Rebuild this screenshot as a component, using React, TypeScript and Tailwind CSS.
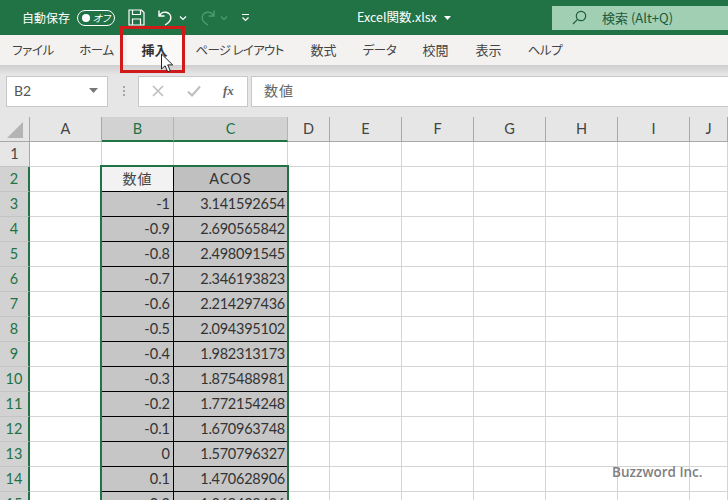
import React from "react";

const tabs: [string, number, boolean][] = [
  ["ファイル", 66, false],
  ["ホーム", 61, false],
  ["挿入", 55, true],
  ["ページ レイアウト", 115, false],
  ["数式", 53, true],
  ["データ", 59, false],
  ["校閲", 53, true],
  ["表示", 53, true],
  ["ヘルプ", 60, false],
];

const cols = ["A", "B", "C", "D", "E", "F", "G", "H", "I", "J"];
const data: [string, string][] = [
  ["-1", "3.141592654"],
  ["-0.9", "2.690565842"],
  ["-0.8", "2.498091545"],
  ["-0.7", "2.346193823"],
  ["-0.6", "2.214297436"],
  ["-0.5", "2.094395102"],
  ["-0.4", "1.982313173"],
  ["-0.3", "1.875488981"],
  ["-0.2", "1.772154248"],
  ["-0.1", "1.670963748"],
  ["0", "1.570796327"],
  ["0.1", "1.470628906"],
  ["0.2", "1.369438406"],
];

function Blank() {
  return <div className="border-r border-b border-[#d4d4d4] bg-white" />;
}

function Row({ n }: { n: number }) {
  const inTable = n >= 2;
  const rowHead = (
    <div
      className={
        inTable
          ? "flex items-center justify-center border-b border-[#c4c4c4] border-r-2 border-r-[#217346] bg-[#d2d2d2] pb-[1px] text-[#217346]"
          : "flex items-center justify-center border-b border-[#c4c4c4] border-r border-r-[#a8a8a8] bg-[#e6e6e6] pb-[1px] text-[#444444]"
      }
    >
      {n}
    </div>
  );
  let b: React.ReactNode = <Blank />;
  let c: React.ReactNode = <Blank />;
  if (n === 2) {
    b = (
      <div className="flex items-center justify-center border-r border-b border-black bg-[#f2f2f2] pb-[2px] font-['Noto_Sans_CJK_JP',sans-serif] text-[14px] text-[#444444] tracking-[1px]">
        数値
      </div>
    );
    c = (
      <div className="flex items-center justify-center border-r border-b border-black bg-[#c0c0c0] pb-[1px] text-[#333333] tracking-[1px]">
        ACOS
      </div>
    );
  } else if (n > 2) {
    const d = data[n - 3];
    b = (
      <div className="flex items-center justify-end border-r border-b border-black bg-[#c6c6c6] pr-[3px] pb-[1px] text-[#333333]">
        {d[0]}
      </div>
    );
    c = (
      <div className="flex items-center justify-end border-r border-b border-black bg-[#c6c6c6] pr-[2px] pb-[1px] tracking-[-0.25px] text-[#333333]">
        {d[1]}
      </div>
    );
  }
  return (
    <>
      {rowHead}
      <Blank />
      {b}
      {c}
      {Array.from({ length: 7 }).map((_, i) => (
        <Blank key={i} />
      ))}
    </>
  );
}

export default function App() {
  return (
    <div className="relative h-[500px] w-[728px] overflow-hidden bg-white font-['Lato',sans-serif] text-[14.5px]">
      {/* Title bar */}
      <div className="flex h-[35px] items-center bg-[#217346] font-['Noto_Sans_CJK_JP',sans-serif] text-[12px] text-white">
        <span className="ml-[22px] w-[48px] whitespace-nowrap">自動保存</span>
        <div className="ml-[7px] flex h-[16px] w-[38px] items-center justify-between rounded-full border border-white pl-[4px] pr-[4px]">
          <span className="h-[8px] w-[8px] rounded-full bg-white" />
          <span className="text-[10px] leading-none italic [font-feature-settings:'palt']">オフ</span>
        </div>
        <svg className="ml-[13px]" width="17" height="17" viewBox="0 0 17 17" fill="none" stroke="#ffffff" strokeWidth="1.2">
          <path d="M1 1h12.5L16 3.5V16H1z" />
          <path d="M4.5 1v4.5h8V1M4.5 16v-6h8v6" />
        </svg>
        <svg className="ml-[12px]" width="17" height="17" viewBox="0 0 17 17" fill="none" stroke="#ffffff" strokeWidth="1.4">
          <path d="M2 1.5V7h5.5M2.3 6.6C4 3.8 6.4 2.8 9 3.2c3.2.6 5.2 3.2 4.8 6.2-.4 2.6-2.2 4.6-5.8 6.6" />
        </svg>
        <svg className="ml-[5px]" width="8" height="6" viewBox="0 0 8 6" fill="none" stroke="#ffffff" strokeWidth="1.2">
          <path d="M1 1.5l3 3 3-3" />
        </svg>
        <svg className="ml-[12px]" width="17" height="17" viewBox="0 0 17 17" fill="none" stroke="#4f9a72" strokeWidth="1.4">
          <path d="M15 1.5V7H9.5M14.7 6.6C13 3.8 10.6 2.8 8 3.2c-3.2.6-5.2 3.2-4.8 6.2.4 2.6 2.2 4.6 5.8 6.6" />
        </svg>
        <svg className="ml-[4px]" width="8" height="6" viewBox="0 0 8 6" fill="none" stroke="#4f9a72" strokeWidth="1.2">
          <path d="M1 1.5l3 3 3-3" />
        </svg>
        <svg className="ml-[13px]" width="9" height="9" viewBox="0 0 9 9" fill="none" stroke="#ffffff" strokeWidth="1.2">
          <path d="M1 1.5h7M1.5 4.5L4.5 7.5l3-3" />
        </svg>
        <span className="ml-[107px] w-[82px] whitespace-nowrap text-[12.5px] [font-feature-settings:'palt']">
          Excel関数.xlsx
        </span>
        <svg className="ml-[5px]" width="7" height="4" viewBox="0 0 7 4" fill="#ffffff">
          <path d="M0 0h7L3.5 4z" />
        </svg>
        <div className="ml-[101px] flex h-[24px] flex-1 items-center bg-[#a0cfb4] text-[#1d5a38]">
          <svg className="ml-[20px]" width="15" height="15" viewBox="0 0 15 15" fill="none" stroke="#1f5e3b" strokeWidth="1.2">
            <circle cx="9" cy="6" r="4.7" />
            <path d="M5.6 9.4L1 14" />
          </svg>
          <span className="ml-[15px] whitespace-nowrap text-[13px]">検索 (Alt+Q)</span>
        </div>
      </div>

      {/* Ribbon tabs */}
      <div className="flex h-[30px] items-center bg-[#f3f2f1] font-['Noto_Sans_CJK_JP',sans-serif] text-[#444444] [font-feature-settings:'palt']">
        {tabs.map(([t, w, kanji], i) => (
          <div
            key={t}
            style={{ width: w }}
            className={
              i === 2
                ? "flex h-full shrink-0 items-center justify-center bg-[#faf9f8] text-[13px] font-bold text-[#333333]"
                : kanji
                  ? "flex h-full shrink-0 items-center justify-center whitespace-nowrap text-[13px]"
                  : i === 3
                    ? "flex h-full shrink-0 items-center justify-center whitespace-nowrap text-[12.5px] tracking-[-0.7px]"
                    : "flex h-full shrink-0 items-center justify-center whitespace-nowrap text-[12.5px] tracking-[-0.4px]"
            }
          >
            {t}
          </div>
        ))}
      </div>

      {/* Formula bar */}
      <div className="flex h-[52px] items-start bg-[#e6e6e6] bg-[linear-gradient(#cfcfcf,#e6e6e6_10px)] pt-[11px] pl-[6px] font-['Noto_Sans_CJK_JP',sans-serif]">
        <div className="flex h-[31px] w-[102px] items-center justify-between border border-[#c8c8c8] bg-white pb-[2px] pl-[7px] pr-[9px] font-['Lato',sans-serif] text-[14px] text-[#555555]">
          <span>B2</span>
          <svg width="9" height="5" viewBox="0 0 9 5" fill="#777777">
            <path d="M0 0h9L4.5 5z" />
          </svg>
        </div>
        <div className="mt-[10px] ml-[15px] flex w-[3px] flex-col gap-[2px]">
          <span className="h-[2px] w-[2px] bg-[#a6a6a6]" />
          <span className="h-[2px] w-[2px] bg-[#a6a6a6]" />
          <span className="h-[2px] w-[2px] bg-[#a6a6a6]" />
        </div>
        <div className="ml-[12px] flex h-[31px] w-[110px] items-center border border-[#c8c8c8] bg-white pb-[2px]">
          <svg className="ml-[13px]" width="12" height="12" viewBox="0 0 12 12" stroke="#bdbdbd" strokeWidth="1.6" fill="none">
            <path d="M1 1l10 10M11 1L1 11" />
          </svg>
          <svg className="ml-[23px]" width="14" height="12" viewBox="0 0 14 12" stroke="#bdbdbd" strokeWidth="2" fill="none">
            <path d="M1 6.5L5 10.5 13 1.5" />
          </svg>
          <span className="ml-[22px] font-['Liberation_Serif',serif] text-[13px] font-bold text-[#666666] italic">fx</span>
        </div>
        <div className="ml-[3px] flex h-[31px] flex-1 items-center border-y border-l border-[#c8c8c8] bg-white pb-[3px] pl-[12px] text-[14px] tracking-[1px] text-[#666666]">
          数値
        </div>
      </div>

      {/* Sheet */}
      <div className="grid grid-cols-[30px_72px_72px_114px_42px_72px_72px_72px_72px_72px_38px] auto-rows-[25px]">
        <div className="flex items-center justify-center border-r border-b border-[#a8a8a8] bg-[#e6e6e6]">
          <svg className="mt-[1px] ml-[1px]" width="18" height="18" viewBox="0 0 18 18" fill="#b4b4b4">
            <path d="M17 1v16H1z" />
          </svg>
        </div>
        {cols.map((c) => {
          const sel = c === "B" || c === "C";
          return (
            <div
              key={c}
              className={
                sel
                  ? "flex items-center justify-center border-r border-r-[#b4b4b4] border-b-2 border-b-[#217346] bg-[#d2d2d2] text-[#217346]"
                  : "flex items-center justify-center border-r border-b border-[#a8a8a8] bg-[#e6e6e6] text-[#444444]"
              }
            >
              {c}
            </div>
          );
        })}
        {Array.from({ length: 15 }).map((_, i) => (
          <Row key={i} n={i + 1} />
        ))}
      </div>

      {/* Selection outline */}
      <div className="absolute top-[165px] left-[100px] h-[360px] w-[189px] border-2 border-[#217346]" />

      {/* Highlight box */}
      <div className="absolute top-[26px] left-[120px] h-[47px] w-[65px] border-[3px] border-[#d01a1a]" />

      {/* Mouse pointer */}
      <svg className="absolute top-[53px] left-[160px]" width="16" height="20" viewBox="0 0 16 20">
        <path d="M1.5 1v15l3.6-3.2 2.6 6 2.6-1.1-2.6-5.8h5z" fill="#ffffff" stroke="#222222" strokeWidth="1" />
      </svg>

      {/* Watermark */}
      <div className="absolute top-[462px] left-[612px] font-['Open_Sans',sans-serif] text-[13.5px] font-semibold text-[#808080]">
        Buzzword Inc.
      </div>
    </div>
  );
}
